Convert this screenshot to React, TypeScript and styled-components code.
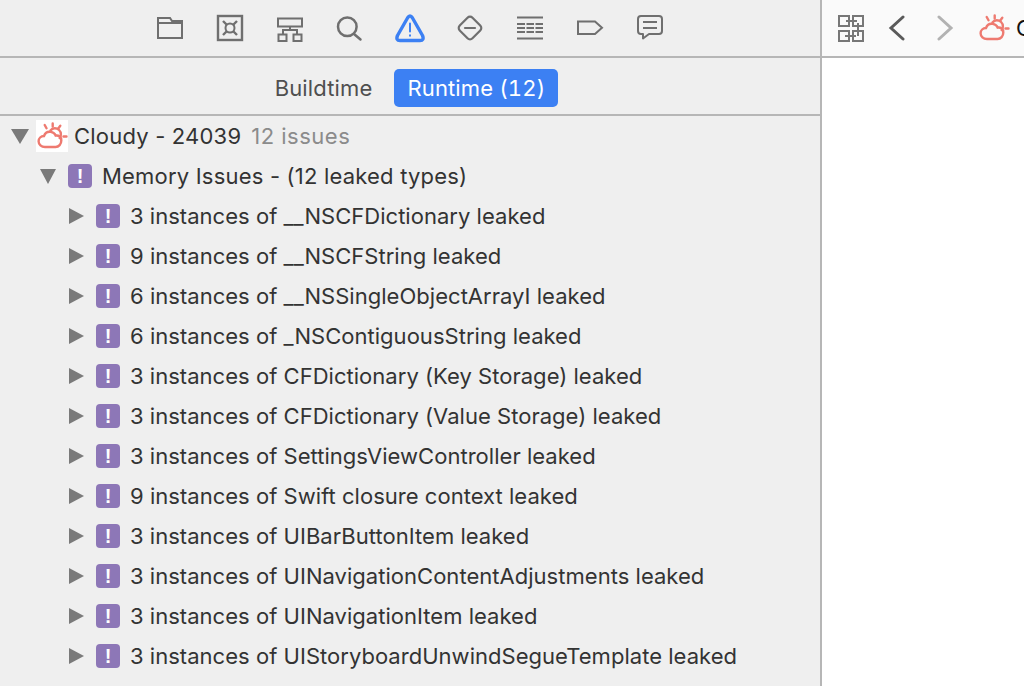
import React from "react";
import styled, { createGlobalStyle } from "styled-components";

const Global = createGlobalStyle`
  html, body { margin: 0; padding: 0; background: #fff; }
  #root { width: 1024px; height: 686px; overflow: hidden; }
`;

const Window = styled.div`
  display: flex;
  width: 1024px;
  height: 686px;
  overflow: hidden;
  font-family: Inter, "Liberation Sans", sans-serif;
  -webkit-font-smoothing: antialiased;
`;

const Navigator = styled.div`
  width: 820px;
  flex: none;
  display: flex;
  flex-direction: column;
  background: #efefef;
  border-right: 2px solid #b6b6b6;
`;

const Toolbar = styled.div`
  height: 56px;
  flex: none;
  display: flex;
  justify-content: center;
  align-items: center;
  border-bottom: 2px solid #b6b6b6;
`;

const ToolButton = styled.div`
  width: 60px;
  height: 30px;
  display: flex;
  justify-content: center;
  color: #6f6f6f;
`;

const Tabs = styled.div`
  height: 58px;
  flex: none;
  display: flex;
  align-items: center;
  justify-content: center;
  gap: 22px;
  padding: 4px 0 0 13px;
  box-sizing: border-box;
  border-bottom: 2px solid #b6b6b6;
`;

const Tab = styled.div<{ $active?: boolean }>`
  height: 38px;
  display: flex;
  align-items: center;
  border-radius: 5px;
  padding: 0 ${(p) => (p.$active ? "13px" : "0")};
  font-size: 22px;
  font-feature-settings: ${(p) => (p.$active ? '"tnum"' : "normal")};
  letter-spacing: ${(p) => (p.$active ? "0.12px" : "0.15px")};
  color: ${(p) => (p.$active ? "#ffffff" : "#4f4f4f")};
  background: ${(p) => (p.$active ? "#3c80f3" : "transparent")};
`;

const Tree = styled.div`
  flex: 1;
`;

const Row = styled.div<{ $depth: number }>`
  height: 40px;
  display: flex;
  align-items: center;
  padding-left: ${(p) => 11 + p.$depth * 28}px;
  white-space: nowrap;
  font-size: 22px;
  letter-spacing: ${(p) => (p.$depth < 2 ? "0.2px" : "0.03px")};
  color: #333333;
`;

const Toggle = styled.div`
  width: 18px;
  flex: none;
  display: flex;
  justify-content: center;
`;

const Down = styled.div<{ $w: number }>`
  width: 0;
  height: 0;
  border-left: ${(p) => p.$w / 2}px solid transparent;
  border-right: ${(p) => p.$w / 2}px solid transparent;
  border-top: 15px solid #7a7a7a;
`;

const Right = styled.div`
  width: 0;
  height: 0;
  border-top: 8.5px solid transparent;
  border-bottom: 8.5px solid transparent;
  border-left: 15px solid #7a7a7a;
`;

const AppIcon = styled.div`
  width: 32px;
  height: 32px;
  flex: none;
  background: #fff;
  margin: 0 6px 0 7px;
  color: #ee7a70;
`;

const Badge = styled.div`
  width: 24px;
  height: 24px;
  flex: none;
  margin: 0 10px 0 11px;
  border-radius: 4px;
  background: #8d77b7;
  color: #fff;
  font-family: "Liberation Sans", sans-serif;
  font-weight: 700;
  font-size: 20px;
  line-height: 24px;
  letter-spacing: 0;
  text-align: center;
`;

const Muted = styled.span`
  color: #8b8b8b;
  margin-left: 10px;
  letter-spacing: 0.5px;
`;

const Editor = styled.div`
  flex: 1;
  min-width: 0;
  background: #fff;
`;

const JumpBar = styled.div`
  height: 56px;
  display: flex;
  align-items: center;
  overflow: hidden;
  white-space: nowrap;
  border-bottom: 2px solid #b6b6b6;
  background: #fafafa;
  padding-left: 14px;
  font-size: 22px;
  color: #111;
`;

const Nav = styled.div<{ $muted?: boolean; $left: number }>`
  display: flex;
  flex: none;
  margin-left: ${(p) => p.$left}px;
  color: ${(p) => (p.$muted ? "#b2b2b2" : "#5a5a5a")};
`;

const JumpIcon = styled.div`
  width: 32px;
  height: 32px;
  flex: none;
  margin: 0 6px 0 24px;
  color: #ee7a70;
`;

const Svg = (p: { size?: number; children: React.ReactNode }) => (
  <svg width={p.size ?? 30} height={p.size ?? 30} viewBox={`0 0 ${p.size ?? 30} ${p.size ?? 30}`} fill="none" stroke="currentColor" strokeWidth={2}>
    {p.children}
  </svg>
);

const Cloudy = () => (
  <Svg size={32}>
    <g strokeWidth={2.4} strokeLinecap="round">
      <path d="M9 27c-3.700 0-6.400-2.500-6.400-5.700 0-3 2.400-5.200 5.400-5.300 1.100-2.900 3.800-4.600 6.700-4.100 2.400.3 4.300 1.800 5 3.700 3-.6 5.600 1.400 5.600 4.900 0 3.600-2.500 6.500-5.700 6.500z" />
      <path d="M14.500 10.500c1-1.500 2.500-2.300 4.200-2.300 3.400 0 6.200 2.800 6.200 6 0 1.500-.4 2.800-1.200 3.900" />
      <path d="M16.700 3.500v3M8.700 5l1.800 3.300M24.300 5.800l-2 2.700M27.500 16.500h3" />
    </g>
  </Svg>
);

const icons = [
  <path key="f" d="M3 25V5h12l2 3h10v17zM3 10h24" />,
  <g key="s">
    <rect x="3" y="3" width="24" height="24" strokeWidth={2.4} />
    <circle cx="15" cy="15" r="4.500" />
    <path d="M8 8l4 4M22 8l-4 4M8 22l4-4M22 22l-4-4" strokeWidth={2.4} />
  </g>,
  <g key="h">
    <path d="M3 5.500h24v8H3zM15 13.500v3.500M8 22v-5h14v5M3.500 21.500h8v6.500h-8zM18.500 21.500h8v6.500h-8z" />
  </g>,
  <g key="q" strokeWidth={2.5} strokeLinecap="round">
    <circle cx="12.300" cy="13.800" r="9.300" />
    <path d="M19 21l6.500 5.500" />
  </g>,
  <g key="w" stroke="#3c80f3" strokeLinecap="round">
    <path strokeWidth={3.4} strokeLinejoin="round" d="M12.500 5Q15 .9 17.500 5L27.500 22.500Q29.500 27.500 25 27.500H5Q.5 27.500 2.500 22.500Z" />
    <path strokeWidth={2} d="M15 10.500v8M15 22.300v.4" />
  </g>,
  <g key="d" strokeLinecap="round">
    <rect x="6" y="6" width="18" height="18" rx="3.500" transform="rotate(45 15 15)" strokeWidth={2.2} />
    <path d="M10 15h10" strokeWidth={2.200} />
  </g>,
  <g key="t">
    <path d="M2 4.500h26M2 25.500h26" />
    <path d="M2 11h8M11.500 11h7.500M20.500 11h7.500M2 15h8M11.500 15h7.500M20.500 15h7.500M2 19h8M11.500 19h7.500M20.500 19h7.500" />
  </g>,
  <path key="l" d="M3 8.500h17l7 6.300-7 6.200H3z" />,
  <g key="c" strokeLinejoin="round">
    <path d="M6 3h18a3 3 0 0 1 3 3v12a3 3 0 0 1-3 3H14l-6 4.500V21H6a3 3 0 0 1-3-3V6a3 3 0 0 1 3-3z" />
    <path d="M8 9h14M8 15h14" />
  </g>,
];

const issues = [
  "3 instances of __NSCFDictionary leaked",
  "9 instances of __NSCFString leaked",
  "6 instances of __NSSingleObjectArrayI leaked",
  "6 instances of _NSContiguousString leaked",
  "3 instances of CFDictionary (Key Storage) leaked",
  "3 instances of CFDictionary (Value Storage) leaked",
  "3 instances of SettingsViewController leaked",
  "9 instances of Swift closure context leaked",
  "3 instances of UIBarButtonItem leaked",
  "3 instances of UINavigationContentAdjustments leaked",
  "3 instances of UINavigationItem leaked",
  "3 instances of UIStoryboardUnwindSegueTemplate leaked",
];

export default function App() {
  return (
    <Window>
      <Global />
      <Navigator>
        <Toolbar>
          {icons.map((icon, i) => (
            <ToolButton key={i}>
              <Svg>{icon}</Svg>
            </ToolButton>
          ))}
        </Toolbar>
        <Tabs>
          <Tab>Buildtime</Tab>
          <Tab $active>Runtime (12)</Tab>
        </Tabs>
        <Tree>
          <Row $depth={0}>
            <Toggle><Down $w={18} /></Toggle>
            <AppIcon><Cloudy /></AppIcon>
            Cloudy - 24039<Muted>12 issues</Muted>
          </Row>
          <Row $depth={1}>
            <Toggle><Down $w={17} /></Toggle>
            <Badge>!</Badge>
            Memory Issues - (12 leaked types)
          </Row>
          {issues.map((text) => (
            <Row $depth={2} key={text}>
              <Toggle><Right /></Toggle>
              <Badge>!</Badge>
              {text}
            </Row>
          ))}
        </Tree>
      </Navigator>
      <Editor>
        <JumpBar>
          <Nav $left={0}>
            <Svg>
              <g stroke="#777" strokeWidth={2}>
                <path d="M3 3h10v10H3zM17 3h10v10H17zM3 18h10v10H3zM17 18h10v10H17z" />
                <path d="M10 8h11M22 10v13M9 23h11" />
              </g>
            </Svg>
          </Nav>
          <Nav $left={22}>
            <svg width="18" height="26" viewBox="0 0 18 26" fill="none" stroke="currentColor" strokeWidth={3} strokeLinecap="round">
              <path d="M15 2L3 13l12 11" />
            </svg>
          </Nav>
          <Nav $muted $left={30}>
            <svg width="18" height="26" viewBox="0 0 18 26" fill="none" stroke="currentColor" strokeWidth={3} strokeLinecap="round">
              <path d="M3 2l12 11L3 24" />
            </svg>
          </Nav>
          <JumpIcon><Cloudy /></JumpIcon>
          Cloudy
        </JumpBar>
      </Editor>
    </Window>
  );
}
